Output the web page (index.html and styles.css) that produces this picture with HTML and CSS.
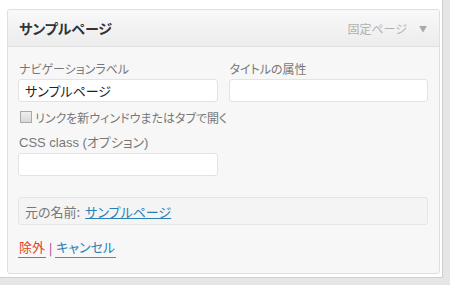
FILE: index.html
```html
<!DOCTYPE html>
<html lang="ja">
<head>
    <meta charset="UTF-8">
    <title>メニュー項目</title>
    <link rel="stylesheet" href="styles.css">
</head>
<body>
    <div class="frame">
        <div class="menu-item">
            <div class="item-bar">
                <span class="item-title">サンプルページ</span>
                <span class="item-controls">
                    <span class="item-type">固定ページ</span>
                    <span class="item-arrow">▼</span>
                </span>
            </div>

            <div class="item-settings">
                <div class="row">
                    <label class="field">
                        <span class="field-label">ナビゲーションラベル</span>
                        <input type="text" class="field-input" value="サンプルページ">
                    </label>
                    <label class="field">
                        <span class="field-label">タイトルの属性</span>
                        <input type="text" class="field-input" value="">
                    </label>
                </div>

                <label class="check">
                    <span class="check-box"></span>
                    <span class="field-label">リンクを新ウィンドウまたはタブで開く</span>
                </label>

                <label class="field field-css">
                    <span class="field-label">CSS class (オプション)</span>
                    <input type="text" class="field-input" value="">
                </label>

                <div class="original">
                    元の名前: <a href="#">サンプルページ</a>
                </div>

                <div class="actions">
                    <a href="#" class="delete">除外</a>
                    <span class="sep">|</span>
                    <a href="#" class="cancel">キャンセル</a>
                </div>
            </div>
        </div>
    </div>
</body>
</html>
```

FILE: styles.css
```css
body {
    margin: 0;
    background-color: #e6e6e6;
    font-family: "Noto Sans CJK JP", "Liberation Sans", sans-serif;
    font-feature-settings: "palt";
}

/* 스크린샷 바깥 흰 테두리 */
.frame {
    width: 443px;
    height: 278px;
    background-color: #fff;
    border-right: 1px solid #cfcfcf;
    border-bottom: 1px solid #cfcfcf;
    padding: 9px 0 0 7px;
    box-sizing: border-box;
}

.menu-item {
    width: 433px;
    height: 265px;
    border: 1px solid #dfdfdf;
    border-radius: 3px;
    background-color: #f7f7f7;
    box-sizing: border-box;
    overflow: hidden;
}

.item-bar {
    height: 37px;
    display: flex;
    align-items: center;
    justify-content: space-between;
    padding: 0 12px 0 11px;
    background: linear-gradient(to bottom, #f9f9f9, #ececec);
    border-bottom: 1px solid #dfdfdf;
    box-sizing: border-box;
}

.item-title {
    font-size: 14px;
    font-weight: bold;
    color: #333;
}

.item-controls {
    display: flex;
    align-items: center;
    gap: 12px;
}

.item-type {
    font-size: 12px;
    color: #b0b0b0;
}

.item-arrow {
    font-size: 8px;
    color: #a8a8a8;
}

.item-settings {
    padding: 13px 11px 0 10px;
}

.row {
    display: flex;
    gap: 11px;
}

.field {
    display: flex;
    flex-direction: column;
    width: 200px;
}

.field-label {
    font-size: 12px;
    line-height: 17px;
    color: #777;
    padding-left: 1px;
}

.field-input {
    margin: 2px 0 0;
    height: 23px;
    padding: 0 6px;
    border: 1px solid #e3e3e3;
    border-radius: 3px;
    background-color: #fff;
    box-sizing: border-box;
    font-family: inherit;
    font-feature-settings: "palt";
    font-size: 13px;
    color: #222;
    outline: none;
}

.check {
    display: flex;
    align-items: center;
    gap: 2px;
    height: 16px;
    margin-top: 7px;
    padding-left: 2px;
}

.check-box {
    width: 10px;
    height: 10px;
    border: 1px solid #a9a9a9;
    background: linear-gradient(to bottom, #eee, #d9d9d9);
}

.field-css {
    margin-top: 9px;
}

.field-css .field-label {
    font-family: "Liberation Sans", "Noto Sans CJK JP", sans-serif;
    font-size: 13px;
}

.original {
    margin-top: 21px;
    height: 28px;
    border: 1px solid #e6e6e6;
    border-radius: 3px;
    background-color: #f4f4f4;
    box-sizing: border-box;
    padding: 0 6px;
    display: flex;
    align-items: center;
    gap: 5px;
    font-size: 13px;
    color: #777;
}

.original a {
    color: #2a7fb5;
}

.actions {
    margin-top: 13px;
    display: flex;
    align-items: center;
    gap: 3px;
    font-size: 13px;
    line-height: 17px;
}

.actions a {
    text-decoration: none;
    padding: 0 1px 2px;
}

.delete {
    color: #dd4422;
    border-bottom: 1px solid #e05a30;
}

.sep {
    color: #8a2e8a;
    font-size: 12px;
    padding-bottom: 2px;
}

.cancel {
    color: #2a7fb5;
    border-bottom: 1px solid #4a90c0;
}
```
